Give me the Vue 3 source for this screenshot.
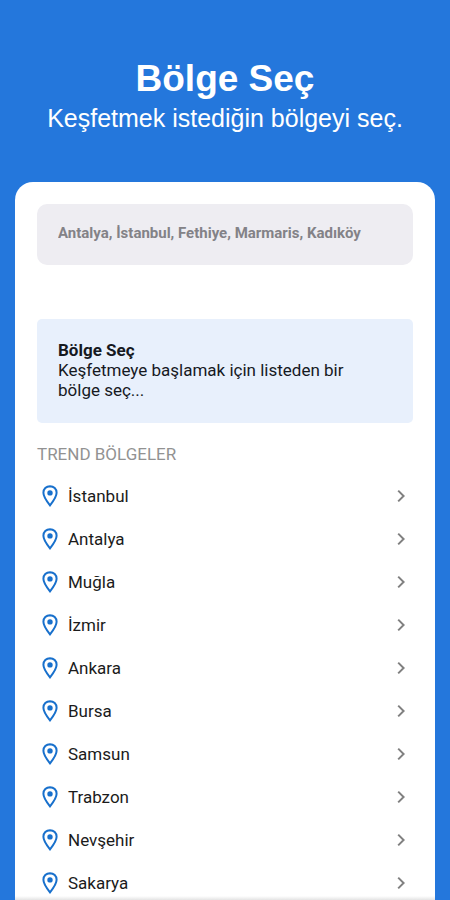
<script setup>
const regions = [
  'İstanbul',
  'Antalya',
  'Muğla',
  'İzmir',
  'Ankara',
  'Bursa',
  'Samsun',
  'Trabzon',
  'Nevşehir',
  'Sakarya',
]
</script>

<template>
  <div class="page" lang="tr">
    <header class="hero">
      <h1 class="hero-title">Bölge Seç</h1>
      <p class="hero-text">Keşfetmek istediğin bölgeyi seç.</p>
    </header>

    <main class="card">
      <input
        class="search"
        type="search"
        aria-label="Bölge ara"
        placeholder="Antalya, İstanbul, Fethiye, Marmaris, Kadıköy"
      />

      <section class="notice">
        <h2 class="notice-title">Bölge Seç</h2>
        <p class="notice-text">Keşfetmeye başlamak için listeden bir bölge seç...</p>
      </section>

      <h2 class="list-title">TREND BÖLGELER</h2>
      <ul class="list">
        <li v-for="region in regions" :key="region">
          <a class="row" href="#">
            <svg class="pin" viewBox="0 0 16 22" aria-hidden="true">
              <path d="M8 1.200C4.200 1.200 1.400 4 1.400 7.700C1.400 12 8 20.300 8 20.300S14.600 12 14.600 7.700C14.600 4 11.800 1.200 8 1.200Z" />
              <circle cx="8" cy="7.900" r="2.700" />
            </svg>
            <span class="name">{{ region }}</span>
            <svg class="chevron" viewBox="0 0 8 14" aria-hidden="true">
              <path d="M1.200 1.600L6.600 7L1.200 12.400" />
            </svg>
          </a>
        </li>
      </ul>
      <div class="edge"></div>
    </main>
  </div>
</template>

<style>
body {
  background: #2477dc;
}
</style>

<style scoped>
.page {
  box-sizing: border-box;
  display: flex;
  flex-direction: column;
  height: 100vh;
  padding: 0 15px;
  overflow: hidden;
  background: #2477dc;
  font-family: Roboto, "Liberation Sans", sans-serif;
}

h1,
h2,
p,
ul {
  margin: 0;
  padding: 0;
}

.hero {
  padding: 56px 0 48px;
  color: #fff;
  font-family: "Liberation Sans", Arial, sans-serif;
  text-align: center;
}

.hero-title {
  font-size: 37px;
  font-weight: 700;
  line-height: 46px;
}

.hero-text {
  font-size: 25px;
  line-height: 32px;
}

.card {
  position: relative;
  box-sizing: border-box;
  flex: 1;
  min-height: 0;
  padding: 22px 22px 0;
  overflow: hidden;
  border-radius: 18px 18px 0 0;
  background: #fff;
}

.search {
  display: block;
  box-sizing: border-box;
  width: 100%;
  height: 61px;
  margin: 0 0 54px;
  padding: 0 21px 3px;
  border: 0;
  border-radius: 10px;
  outline: 0;
  appearance: none;
  background: #eeedf2;
  color: #333;
  font: 700 15px Roboto, "Liberation Sans", sans-serif;
}

.search::placeholder {
  color: #838287;
  opacity: 1;
}

.notice {
  padding: 21px 40px 23px 21px;
  border-radius: 5px;
  background: #e8f0fc;
  color: #16191f;
  font-size: 17px;
  line-height: 20px;
}

.notice-title {
  font-size: 17px;
  font-weight: 700;
  line-height: 20px;
}

.list-title {
  padding: 21px 0 10px;
  color: #929292;
  font-size: 17px;
  font-weight: 400;
  line-height: 20px;
}

.list {
  list-style: none;
}

.row {
  display: flex;
  align-items: center;
  height: 43px;
  padding: 0 8px 0 5px;
  color: #1b1b1b;
  font-size: 17px;
  text-decoration: none;
}

.pin {
  width: 16px;
  height: 22px;
  margin-right: 10px;
  fill: none;
  stroke: #1870cc;
  stroke-width: 2;
}

.pin circle {
  fill: #1870cc;
  stroke: none;
}

.name {
  flex: 1;
}

.chevron {
  width: 8px;
  height: 14px;
  fill: none;
  stroke: #808080;
  stroke-width: 2;
}

.edge {
  position: absolute;
  right: 0;
  bottom: 0;
  left: 0;
  height: 4px;
  background: linear-gradient(rgba(225, 225, 225, 0), #e4e4e4);
}
</style>
